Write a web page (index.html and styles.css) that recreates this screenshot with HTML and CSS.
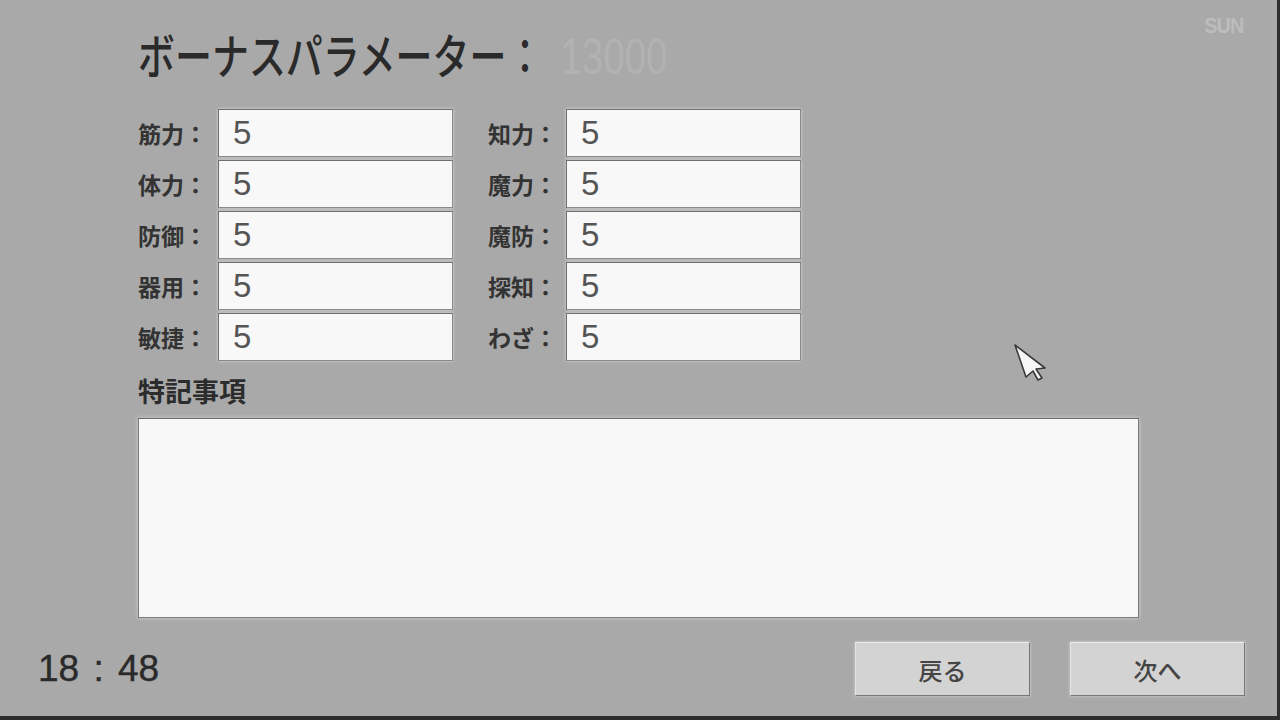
FILE: index.html
```html
<!DOCTYPE html>
<html lang="ja">
<head>
    <meta charset="UTF-8">
    <meta name="viewport" content="width=device-width, initial-scale=1.0">
    <title>ボーナスパラメーター</title>
    <link rel="stylesheet" href="styles.css">
</head>
<body>
    <div class="screen">
        <div class="brand">SUN</div>

        <div class="content">
            <h1 class="title">ボーナスパラメーター：<span class="points">13000</span></h1>

            <div class="param-grid">
                <label class="param-label">筋力：</label>
                <div class="param-box">5</div>
                <label class="param-label right">知力：</label>
                <div class="param-box">5</div>

                <label class="param-label">体力：</label>
                <div class="param-box">5</div>
                <label class="param-label right">魔力：</label>
                <div class="param-box">5</div>

                <label class="param-label">防御：</label>
                <div class="param-box">5</div>
                <label class="param-label right">魔防：</label>
                <div class="param-box">5</div>

                <label class="param-label">器用：</label>
                <div class="param-box">5</div>
                <label class="param-label right">探知：</label>
                <div class="param-box">5</div>

                <label class="param-label">敏捷：</label>
                <div class="param-box">5</div>
                <label class="param-label right">わざ：</label>
                <div class="param-box">5</div>
            </div>

            <h2 class="notes-title">特記事項</h2>
            <div class="notes-box"></div>
        </div>

        <div class="footer">
            <div class="clock">18 : 48</div>
            <div class="buttons">
                <button class="btn">戻る</button>
                <button class="btn">次へ</button>
            </div>
        </div>

        <svg class="cursor" width="42" height="42" viewBox="0 0 42 42">
            <path d="M2 2 L32 25 L23 26 L29 35 L25 37 L20 28 L13 34 Z" fill="#f6f6f6" stroke="#3a3a3a" stroke-width="1.6" stroke-linejoin="round"/>
        </svg>
    </div>
</body>
</html>
```

FILE: styles.css
```css
body {
    margin: 0;
    background-color: #a9a9a9;
    font-family: "Noto Sans CJK JP", "Noto Sans", sans-serif;
    color: #333;
}

.screen {
    position: relative;
    width: 1280px;
    height: 720px;
    box-sizing: border-box;
    background-color: #a9a9a9;
    border-right: 3px solid #2e2e2e;
    border-bottom: 4px solid #2e2e2e;
    overflow: hidden;
}

.brand {
    position: absolute;
    top: 13px;
    right: 32px;
    font-family: "Liberation Sans", sans-serif;
    font-weight: bold;
    font-size: 22px;
    letter-spacing: -1px;
    transform: scaleX(0.9);
    color: #bdbdbd;
}

.content {
    padding: 22px 0 0 138px;
}

.title {
    margin: 0;
    font-size: 48px;
    line-height: 62px;
    font-weight: 500;
    color: #2a2a2a;
    white-space: nowrap;
    transform: scaleX(0.77);
    transform-origin: left center;
}

.points {
    font-family: "Liberation Sans", sans-serif;
    font-weight: normal;
    font-size: 50px;
    color: #b2b2b2;
    margin-left: 22px;
}

.param-grid {
    display: grid;
    grid-template-columns: 80px 235px 35px 78px 235px;
    grid-auto-rows: 48px;
    row-gap: 3px;
    margin-top: 21px;
}

.param-label {
    display: flex;
    align-items: center;
    font-size: 23px;
    font-weight: bold;
    color: #333;
}

.param-label.right {
    grid-column: 4;
}

.param-box {
    display: flex;
    align-items: center;
    box-sizing: border-box;
    padding-left: 14px;
    background-color: #f8f8f8;
    border: 1px solid #8a8a8a;
    border-top-color: #6f6f6f;
    border-left-color: #6f6f6f;
    box-shadow: 0 0 3px rgba(255, 255, 255, 0.6);
    font-family: "Liberation Sans", sans-serif;
    font-size: 33px;
    color: #555;
}

.notes-title {
    margin: 10px 0 0 0;
    font-size: 27px;
    line-height: 40px;
    font-weight: bold;
    color: #2c2c2c;
}

.notes-box {
    width: 1001px;
    height: 200px;
    margin-top: 7px;
    box-sizing: border-box;
    background-color: #f8f8f8;
    border: 1px solid #7a7a7a;
    border-top-color: #6a6a6a;
    box-shadow: 0 0 4px rgba(255, 255, 255, 0.5);
}

.footer {
    display: flex;
    justify-content: space-between;
    align-items: center;
    padding: 24px 32px 0 38px;
}

.clock {
    font-family: "Liberation Sans", sans-serif;
    font-size: 37px;
    word-spacing: 4px;
    color: #2a2a2a;
    -webkit-text-stroke: 0.4px #2a2a2a;
}

.buttons {
    display: flex;
    gap: 40px;
}

.btn {
    width: 175px;
    height: 54px;
    background-color: #d3d3d3;
    border: 1px solid #8a8a8a;
    border-top-color: #eeeeee;
    border-left-color: #e4e4e4;
    border-bottom-color: #777;
    border-right-color: #777;
    box-shadow: 0 0 3px rgba(255, 255, 255, 0.5);
    font-family: "Noto Sans CJK JP", sans-serif;
    font-size: 24px;
    color: #444;
    font-weight: 500;
}

.cursor {
    position: absolute;
    left: 1013px;
    top: 343px;
}
```
